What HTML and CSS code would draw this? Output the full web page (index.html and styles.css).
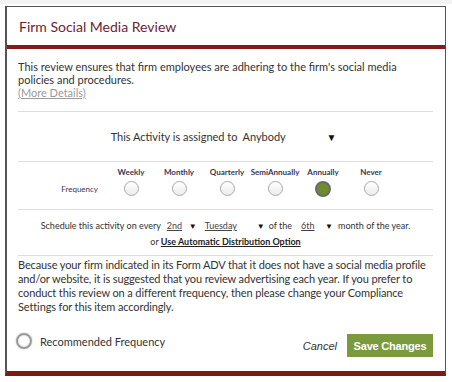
FILE: index.html
```html
<!DOCTYPE html>
<html>
  <head>
    <title>Firm Social Media Review</title>
    <link rel="stylesheet" href="styles.css">
  </head>
  <body>
    <div class="backdrop">
      <div class="modal">
        <div class="modal-header">
          <h1 class="modal-title">Firm Social Media Review</h1>
        </div>
        <div class="modal-body">
          <p class="intro">This review ensures that firm employees are adhering to the firm's social media policies and procedures.<br><a class="more" href="#">(More Details)</a></p>

          <div class="section assign">
            <span>This Activity is assigned to</span>
            <span class="select-anybody">Anybody</span>
            <span class="caret">&#9660;</span>
          </div>

          <div class="section freq">
            <div class="freq-label">Frequency</div>
            <div class="freq-opt"><span class="opt-name">Weekly</span><span class="radio"></span></div>
            <div class="freq-opt"><span class="opt-name">Monthly</span><span class="radio"></span></div>
            <div class="freq-opt"><span class="opt-name">Quarterly</span><span class="radio"></span></div>
            <div class="freq-opt"><span class="opt-name">SemiAnnually</span><span class="radio"></span></div>
            <div class="freq-opt"><span class="opt-name">Annually</span><span class="radio checked"></span></div>
            <div class="freq-opt"><span class="opt-name">Never</span><span class="radio"></span></div>
          </div>

          <div class="section schedule">
            <div class="sched-line">
              <span>Schedule this activity on every</span>
              <span class="pick p-nth">2nd</span><span class="caret sm">&#9660;</span>
              <span class="pick p-day">Tuesday</span><span class="caret sm">&#9660;</span>
              <span class="of-the">of the</span>
              <span class="pick p-month">6th</span><span class="caret sm">&#9660;</span>
              <span class="tail">month of the year.</span>
            </div>
            <div class="sched-line">or&nbsp;<a class="auto-link" href="#">Use Automatic Distribution Option</a></div>
          </div>

          <p class="note">Because your firm indicated in its Form ADV that it does not have a social media profile and/or website, it is suggested that you review advertising each year. If you prefer to conduct this review on a different frequency, then please change your Compliance Settings for this item accordingly.</p>

          <div class="modal-footer">
            <label class="recommended"><span class="big-radio"></span>Recommended Frequency</label>
            <div class="actions">
              <a class="cancel" href="#">Cancel</a>
              <button class="save">Save Changes</button>
            </div>
          </div>
        </div>
      </div>
    </div>
  </body>
</html>
```

FILE: styles.css
```css
body { margin: 0; background: #fff; font-family: Lato, "Open Sans", sans-serif; color: #333; }

.backdrop { height: 382px; padding: 2px 0 0 5px; box-sizing: border-box; border-top: 4px solid #f3f3f3; }

.modal { width: 441px; height: 370px; border: 1px solid #555; border-left-width: 2px; border-bottom: 5px solid #7e1a14; box-sizing: border-box; background: #fff; display: flex; flex-direction: column; }

.modal-header { height: 38px; border-bottom: 4px solid #851b16; display: flex; align-items: center; padding: 0 12px; }
.modal-title { margin: 0; font-weight: normal; font-size: 14px; color: #6e2335; }

.modal-body { padding: 11px 12px 0 11px; flex: 1; display: flex; flex-direction: column; }

.intro { margin: 0 0 12px; font-size: 11px; line-height: 13px; }
.more { color: #9a9a9a; }

.section { border-top: 1px solid #ddd; }

.assign { height: 49px; display: flex; align-items: center; justify-content: center; font-size: 11px; padding-right: 4px; }
.select-anybody { margin-left: 5px; width: 84px; }
.caret { font-size: 10px; color: #111; }

.freq { height: 48px; display: flex; align-items: flex-start; padding-top: 5px; box-sizing: border-box; }
.freq-label { width: 80px; text-align: right; padding-right: 9px; font-size: 8px; margin-top: 17px; color: #3d3550; }
.freq-opt { width: 48px; display: flex; flex-direction: column; align-items: center; gap: 4px; }
.opt-name { font-size: 8px; font-weight: bold; color: #3d3550; line-height: 10px; }
.radio { width: 13px; height: 13px; border: 1px solid #a8a8a8; border-radius: 50%; background: linear-gradient(#fff, #ececec); }
.radio.checked { background: #6f8c2c; border: 2px solid #6a6a6a; width: 12px; height: 12px; }

.schedule { height: 46px; display: flex; flex-direction: column; align-items: center; padding-top: 10px; box-sizing: border-box; gap: 4px; font-size: 9px; }
.sched-line { line-height: 12px; display: flex; align-items: baseline; white-space: nowrap; }
.pick { text-decoration: underline; color: #444; display: inline-block; }
.p-nth { width: 22px; margin-left: 6px; }
.p-day { width: 52px; margin-left: 9px; }
.p-month { width: 24px; margin-left: 9px; }
.of-the { margin-left: 5px; }
.tail { margin-left: 6px; }
.caret.sm { font-size: 8px; width: 7px; }
.auto-link { color: #222; font-weight: bold; text-decoration: underline; }

.note { margin: 0; border-top: 1px solid #ddd; padding-top: 2px; font-size: 11px; line-height: 14px; letter-spacing: -0.12px; }

.modal-footer { margin-top: auto; height: 46px; display: flex; align-items: flex-start; justify-content: space-between; }
.recommended { display: flex; align-items: center; gap: 8px; font-size: 11px; margin-top: 8px; margin-left: -2px; }
.big-radio { width: 12px; height: 12px; border: 2px solid #9a9a9a; border-radius: 50%; box-shadow: 0 0 2px #bbb, inset 0 0 2px #ccc; }
.actions { display: flex; align-items: center; gap: 10px; margin-top: 9px; }
.cancel { font-family: "Liberation Sans", Arial, sans-serif; font-style: italic; font-size: 11px; color: #333; text-decoration: none; }
.save { background: #7b9a3d; border: none; color: #fff; font-family: "Liberation Sans", Arial, sans-serif; font-weight: bold; font-size: 11px; height: 23px; width: 86px; padding: 0; letter-spacing: -0.2px; }
```
